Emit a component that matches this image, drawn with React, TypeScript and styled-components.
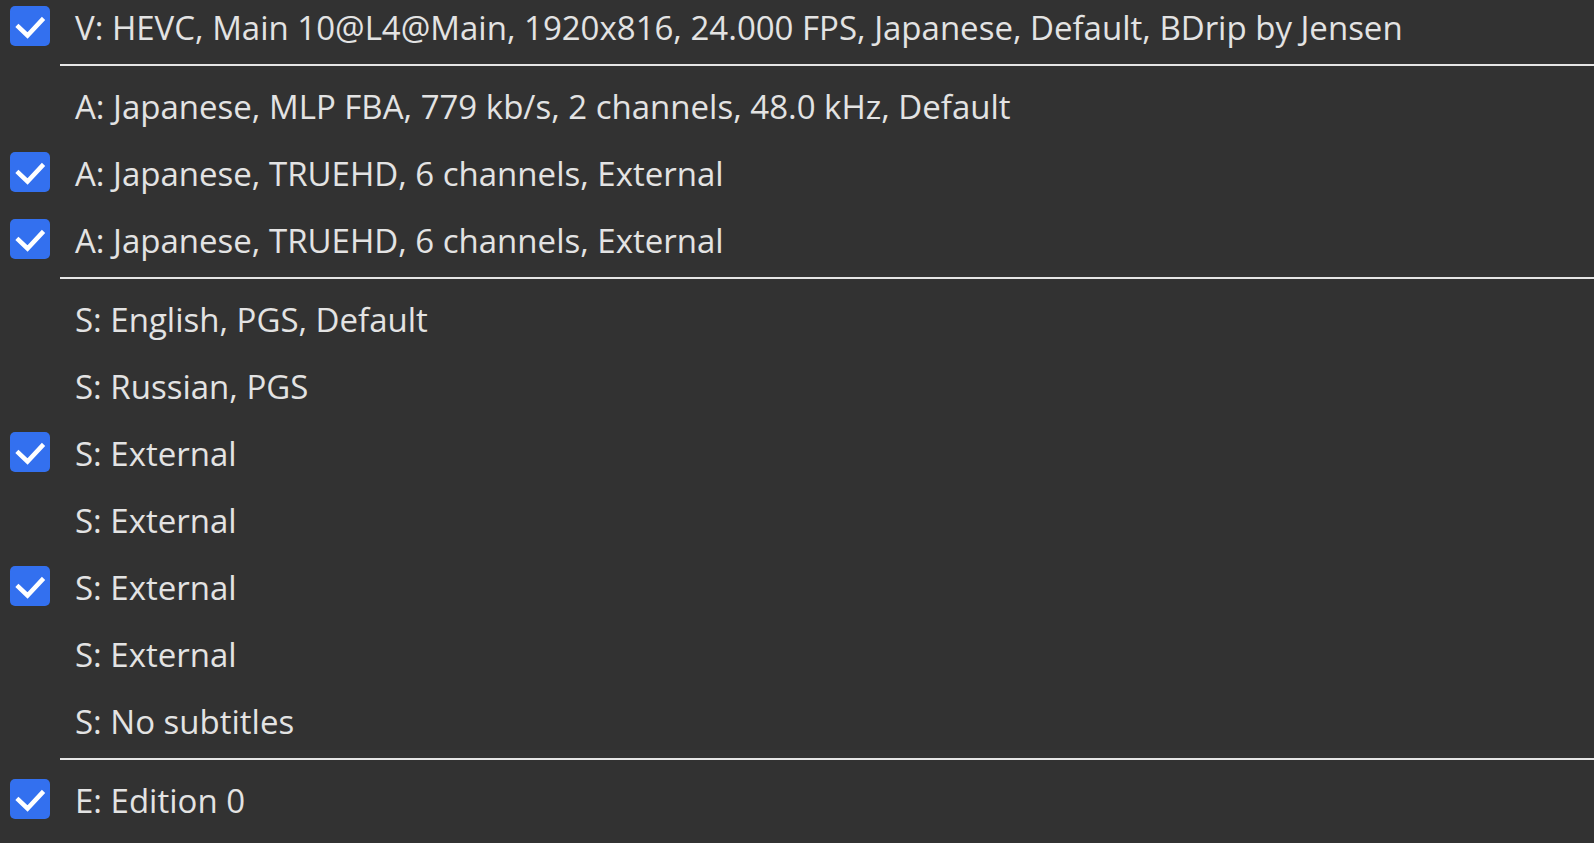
import React, { FunctionComponent } from "react";
import styled, { createGlobalStyle } from "styled-components";

type Track = { label: string; checked?: boolean };

const groups: Track[][] = [
  [{ label: "V: HEVC, Main 10@L4@Main, 1920x816, 24.000 FPS, Japanese, Default, BDrip by Jensen", checked: true }],
  [
    { label: "A: Japanese, MLP FBA, 779 kb/s, 2 channels, 48.0 kHz, Default" },
    { label: "A: Japanese, TRUEHD, 6 channels, External", checked: true },
    { label: "A: Japanese, TRUEHD, 6 channels, External", checked: true },
  ],
  [
    { label: "S: English, PGS, Default" },
    { label: "S: Russian, PGS" },
    { label: "S: External", checked: true },
    { label: "S: External" },
    { label: "S: External", checked: true },
    { label: "S: External" },
    { label: "S: No subtitles" },
  ],
  [{ label: "E: Edition 0", checked: true }],
];

const App: FunctionComponent = () => {
  return (
    <>
      <GlobalStyle />
      <Menu>
        {groups.map((group, gi) => (
          <React.Fragment key={gi}>
            {gi > 0 && <Separator />}
            {group.map((track, ti) => (
              <Row key={ti}>
                <CheckSlot>
                  {track.checked && (
                    <CheckBox>
                      <svg width="40" height="40" viewBox="0 0 40 40">
                        <polyline
                          points="8.5,21 17.5,29.5 32,14"
                          fill="none"
                          stroke="#ffffff"
                          strokeWidth="4.5"
                          strokeLinecap="square"
                        />
                      </svg>
                    </CheckBox>
                  )}
                </CheckSlot>
                <Label>{track.label}</Label>
              </Row>
            ))}
          </React.Fragment>
        ))}
      </Menu>
    </>
  );
};

const GlobalStyle = createGlobalStyle`
  html, body {
    margin: 0;
    padding: 0;
    background: #323232;
    overflow: hidden;
  }
`;

const Menu = styled.div`
  display: flex;
  flex-direction: column;
  margin-top: -8px;
  width: 100%;
  font-family: "Open Sans", "Noto Sans", sans-serif;
`;

const Row = styled.div`
  display: flex;
  align-items: center;
  height: 67px;
`;

const CheckSlot = styled.div`
  width: 40px;
  height: 40px;
  margin-left: 10px;
  margin-right: 25px;
  flex-shrink: 0;
`;

const CheckBox = styled.div`
  width: 40px;
  height: 40px;
  border-radius: 5px;
  background-color: #3370ef;
  display: flex;
`;

const Label = styled.div`
  color: #e3e3e3;
  font-size: 33px;
  padding-top: 4px;
  white-space: nowrap;
`;

const Separator = styled.div`
  height: 2px;
  margin: 5px 0 5px 60px;
  background-color: #e6e6e6;
`;

export default App;
